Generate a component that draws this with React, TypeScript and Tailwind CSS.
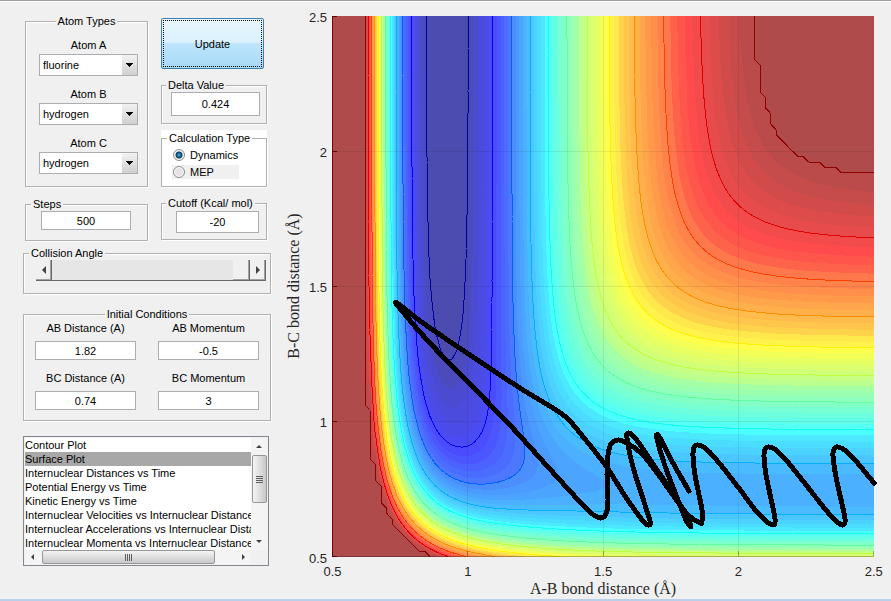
import { useMemo } from "react";
import type { ReactNode } from "react";

type Point = [number, number];

// LEPS parameters, kcal/mol and angstrom
const HF = { depth: 141.2, beta: 2.2187, r0: 0.917 };
const HH = { depth: 109.5, beta: 1.942, r0: 0.7414 };
const SATO = 0.187;
const CEILING = -22.6;
const STEP = 0.02;
const GRID = 101;
const BAND = 2.08;
const BAND_COUNT = 56;
const BANDS_PER_LINE = 5;

const ATOMS = ["hydrogen", "fluorine", "chlorine", "deuterium"];

const PLOTS = [
  "Contour Plot",
  "Surface Plot",
  "Internuclear Distances vs Time",
  "Potential Energy vs Time",
  "Kinetic Energy vs Time",
  "Internuclear Velocities vs Internuclear Distance",
  "Internuclear Accelerations vs Internuclear Distance",
  "Internuclear Momenta vs Internuclear Distance",
];

const TRAJECTORY: Point[] = [
  [689, 491], [673, 463], [660, 438], [657, 435], [657, 439], [664, 463], [676, 495], [686, 520], [691, 527],
  [688, 519], [675, 496], [655, 467], [636, 439], [629, 433], [627, 438], [633, 467], [645, 505], [650, 521],
  [649, 525], [643, 521], [625, 496], [606, 466], [580, 433], [567, 418], [553, 408], [520, 388], [467, 353],
  [423, 323], [400, 305], [396, 303], [398, 306], [419, 331], [447, 361], [507, 422], [548, 467],
  [580, 502], [591, 513], [600, 518], [606, 514], [608, 500], [607, 475], [608, 455], [611, 444], [618, 440],
  [627, 443], [641, 453], [655, 470], [675, 498], [688, 515], [700, 523], [702, 521], [702, 510], [695, 475],
  [693, 456], [694, 447], [698, 445], [705, 448], [715, 458], [738, 487], [756, 511], [766, 521], [773, 525],
  [775, 522], [774, 513], [766, 475], [764, 457], [765, 449], [769, 447], [776, 450], [786, 460], [803, 481],
  [825, 509], [835, 520], [842, 525], [845, 522], [844, 513], [836, 477], [833, 456], [834, 449], [838, 447],
  [846, 451], [855, 460], [874, 483],
];

const px = (r: number) => 332.5 + (r - 0.5) * 270.6;
const py = (r: number) => 556.5 - (r - 0.5) * 270.2;

function energy(ab: number, bc: number) {
  const terms = (bond: typeof HF, r: number) => {
    const e = Math.exp(-bond.beta * (r - bond.r0));
    const scale = bond.depth / (4 * (1 + SATO));
    return {
      q: scale * ((3 + SATO) * e * e - (2 + 6 * SATO) * e),
      j: scale * ((1 + 3 * SATO) * e * e - (6 + 2 * SATO) * e),
    };
  };
  const a = terms(HF, ab);
  const b = terms(HH, bc);
  const c = terms(HF, ab + bc);
  const exchange = ((a.j - b.j) ** 2 + (b.j - c.j) ** 2 + (a.j - c.j) ** 2) / 2;
  return Math.min(CEILING, a.q + b.q + c.q - Math.sqrt(exchange));
}

// 64 step jet colormap, band 0 is the hottest
function jet(band: number) {
  const t = Math.min(63, Math.max(1, Math.floor(64 - 1.11 * band)));
  const ramp = (center: number) => Math.round(255 * Math.min(1, Math.max(0, (24 - Math.abs(t - center)) / 16)));
  return `rgb(${ramp(48)} ${ramp(32)} ${ramp(16)})`;
}

// Marching squares: area above the level and the line along its edge
function traceLevel(values: number[][], level: number) {
  const area: string[] = [];
  const line: string[] = [];
  const x = (i: number) => px(0.5 + i * STEP);
  const y = (j: number) => py(0.5 + j * STEP);
  const f = (n: number) => n.toFixed(1);

  for (let j = 0; j < GRID - 1; j++) {
    let runStart = -1;
    for (let i = 0; i < GRID; i++) {
      const corners: [number, number][] = [[i, j], [i + 1, j], [i + 1, j + 1], [i, j + 1]];
      const inside = i < GRID - 1 ? corners.map(([a, b]) => values[b][a] >= level) : [false];
      const full = inside.length === 4 && inside.every(Boolean);
      if (full) {
        if (runStart < 0) runStart = i;
        continue;
      }
      if (runStart >= 0) {
        area.push(`M${f(x(runStart))} ${f(y(j))}H${f(x(i))}V${f(y(j + 1))}H${f(x(runStart))}Z`);
        runStart = -1;
      }
      if (!inside.some(Boolean)) continue;

      const shape: string[] = [];
      const cuts: string[] = [];
      corners.forEach(([a, b], k) => {
        const [c, d] = corners[(k + 1) % 4];
        if (inside[k]) shape.push(`${f(x(a))} ${f(y(b))}`);
        if (inside[k] !== inside[(k + 1) % 4]) {
          const t = (level - values[b][a]) / (values[d][c] - values[b][a]);
          const cut = `${f(x(a + (c - a) * t))} ${f(y(b + (d - b) * t))}`;
          shape.push(cut);
          cuts.push(cut);
        }
      });
      area.push(`M${shape.join("L")}Z`);
      line.push(`M${cuts[0]}L${cuts[1]}`);
    }
  }
  return { area: area.join(""), line: line.join("") };
}

function smooth(points: Point[]) {
  let d = `M${points[0].join(" ")}`;
  for (let i = 0; i < points.length - 1; i++) {
    const p0 = points[Math.max(0, i - 1)];
    const p1 = points[i];
    const p2 = points[i + 1];
    const p3 = points[Math.min(points.length - 1, i + 2)];
    d += `C${p1[0] + (p2[0] - p0[0]) / 6} ${p1[1] + (p2[1] - p0[1]) / 6} ${p2[0] - (p3[0] - p1[0]) / 6} ${
      p2[1] - (p3[1] - p1[1]) / 6
    } ${p2[0]} ${p2[1]}`;
  }
  return d;
}

function EnergyPlot() {
  const levels = useMemo(() => {
    const values = Array.from({ length: GRID }, (_, j) =>
      Array.from({ length: GRID }, (_, i) => energy(0.5 + i * STEP, 0.5 + j * STEP))
    );
    const result = [];
    for (let k = BAND_COUNT; k >= 0; k--) {
      const level = CEILING - k * BAND - 0.001;
      result.push({ k, color: jet(k), ...traceLevel(values, level) });
    }
    return result;
  }, []);

  return (
    <svg viewBox="280 1 611 598" className="block w-full" role="img" aria-label="Potential energy surface">
      <rect x="332" y="16" width="542" height="541" fill="white" shapeRendering="crispEdges" />
      <g opacity="0.7" shapeRendering="crispEdges">
        <rect x="332" y="16" width="542" height="541" fill={jet(BAND_COUNT + 1)} />
        {levels.map((l) => (
          <path key={l.k} d={l.area} fill={l.color} />
        ))}
      </g>
      <g fill="none" shapeRendering="crispEdges">
        {levels
          .filter((l) => l.k % BANDS_PER_LINE === 0)
          .map((l) => (
            <path key={l.k} d={l.line} stroke={l.color} />
          ))}
      </g>
      <g stroke="black" strokeOpacity="0.08" shapeRendering="crispEdges">
        {[1, 1.5, 2].map((v) => (
          <path key={v} d={`M${px(v)} 16V557M332 ${py(v)}H874`} />
        ))}
      </g>
      <g shapeRendering="crispEdges" fill="none">
        <path d="M332.5 16V557" stroke="#800000" />
        <path d="M332 556.5H874" stroke="black" strokeOpacity="0.3" />
        {[0.5, 1, 1.5, 2, 2.5].map((v) => (
          <g key={v}>
            <path d={`M332 ${py(v)}h5`} stroke="#600000" />
            <path d={`M${px(v)} 556v-5`} stroke="black" strokeOpacity="0.3" />
          </g>
        ))}
      </g>
      <path
        d={smooth(TRAJECTORY)}
        fill="none"
        stroke="black"
        strokeWidth="5"
        strokeLinecap="round"
        strokeLinejoin="round"
        shapeRendering="crispEdges"
      />
      <g fill="#262626" fontFamily="'Liberation Sans', sans-serif" fontSize="13">
        {[0.5, 1, 1.5, 2, 2.5].map((v) => (
          <g key={v}>
            <text x="327" y={py(v) + 6} textAnchor="end">
              {v}
            </text>
            <text x={px(v)} y="576" textAnchor="middle">
              {v}
            </text>
          </g>
        ))}
      </g>
      <g fill="#262626" fontFamily="'Liberation Serif', serif" fontSize="16" textAnchor="middle">
        <text x="603" y="594">
          A-B bond distance (Å)
        </text>
        <text transform="translate(299 286) rotate(-90)">B-C bond distance (Å)</text>
      </g>
    </svg>
  );
}

interface PanelProps {
  title: string;
  className?: string;
  legendClassName?: string;
  children: ReactNode;
}

function Panel({ title, className = "", legendClassName = "ml-[5px] bg-[#f0f0f0]", children }: PanelProps) {
  return (
    <fieldset
      className={`min-w-0 border border-[#b0b0b0] shadow-[1px_1px_0_white,inset_1px_1px_0_white] ${className}`}
    >
      <legend className={`px-[2px] ${legendClassName}`}>{title}</legend>
      {children}
    </fieldset>
  );
}

function NumberBox({ label, value, className }: { label: string; value: string; className: string }) {
  return (
    <input
      type="text"
      aria-label={label}
      defaultValue={value}
      className={`block border border-[#abadb3] bg-white text-center ${className}`}
    />
  );
}

function AtomSelect({ id, label, value }: { id: string; label: string; value: string }) {
  return (
    <div className="flex flex-col items-center gap-[2px]">
      <label htmlFor={id}>{label}</label>
      <div className="relative h-[22px] w-[99px]">
        <select
          id={id}
          defaultValue={value}
          className="h-full w-full appearance-none border border-[#abadb3] bg-white pl-[3px]"
        >
          {ATOMS.map((atom) => (
            <option key={atom}>{atom}</option>
          ))}
        </select>
        <span className="pointer-events-none absolute inset-y-px right-px flex w-[15px] items-center justify-center bg-linear-to-b from-[#f2f2f2] to-[#d0d0d0]">
          <svg width="7" height="4" viewBox="0 0 7 4" shapeRendering="crispEdges">
            <path d="M0 0h7L3.5 4Z" />
          </svg>
        </span>
      </div>
    </div>
  );
}

function Condition({ id, label, value }: { id: string; label: string; value: string }) {
  return (
    <div className="flex w-[101px] flex-col gap-[6px] text-center">
      <label htmlFor={id}>{label}</label>
      <input id={id} type="text" defaultValue={value} className="h-[19px] border border-[#abadb3] bg-white text-center" />
    </div>
  );
}

function Arrow({ d, className = "" }: { d: string; className?: string }) {
  return (
    <svg width="8" height="8" viewBox="0 0 8 8" fill="#404040" className={className}>
      <path d={d} />
    </svg>
  );
}

function CollisionSlider() {
  return (
    <div className="mr-[4px] ml-[12px] flex h-[21px] border-b border-[#696969]">
      <button
        type="button"
        aria-label="Decrease angle"
        className="flex w-[16px] items-center justify-center border-r border-[#696969] bg-[#f0f0f0] shadow-[inset_-1px_-1px_0_#a0a0a0]"
      >
        <Arrow d="M6 0v8L2 4Z" />
      </button>
      <input
        type="range"
        aria-label="Collision Angle"
        min="0"
        max="180"
        defaultValue="180"
        className="min-w-0 flex-1 appearance-none bg-[#e6e6e6] [&::-webkit-slider-thumb]:h-[20px] [&::-webkit-slider-thumb]:w-[17px] [&::-webkit-slider-thumb]:appearance-none [&::-webkit-slider-thumb]:border-r [&::-webkit-slider-thumb]:border-[#696969] [&::-webkit-slider-thumb]:bg-[#f0f0f0] [&::-webkit-slider-thumb]:shadow-[inset_-1px_-1px_0_#a0a0a0]"
      />
      <button
        type="button"
        aria-label="Increase angle"
        className="flex w-[16px] items-center justify-center border-r border-[#696969] bg-[#f0f0f0] shadow-[inset_-1px_-1px_0_#a0a0a0]"
      >
        <Arrow d="M2 0v8L6 4Z" />
      </button>
    </div>
  );
}

function PlotList() {
  return (
    <div className="mt-[15px] mr-[2px] border border-[#828790] bg-[#f0f0f0] p-px">
      <div className="flex">
        <ul role="listbox" aria-label="Plot type" className="h-[112px] min-w-0 flex-1 overflow-hidden bg-white whitespace-nowrap">
          {PLOTS.map((plot) => (
            <li
              key={plot}
              role="option"
              aria-selected={plot === "Surface Plot"}
              className="h-[14px] leading-[14px] aria-selected:bg-[#a8a8a8]"
            >
              {plot}
            </li>
          ))}
        </ul>
        <div className="flex w-[16px] flex-col items-center bg-[#f4f4f4]">
          <Arrow d="M1 6h6L4 3Z" className="mt-[4px]" />
          <div className="mt-[5px] flex h-[48px] w-[15px] flex-col items-center justify-center gap-px rounded-[2px] border border-[#979797] bg-linear-to-r from-[#f5f5f5] to-[#c8c8c8]">
            <span className="h-px w-[7px] bg-[#606060]" />
            <span className="h-px w-[7px] bg-[#606060]" />
            <span className="h-px w-[7px] bg-[#606060]" />
            <span className="h-px w-[7px] bg-[#606060]" />
          </div>
          <Arrow d="M1 2h6L4 5Z" className="mt-auto mb-[4px]" />
        </div>
      </div>
      <div className="mr-[16px] flex h-[14px] items-center bg-[#f4f4f4]">
        <Arrow d="M5 1v6L2 4Z" className="ml-[4px]" />
        <div className="ml-[5px] flex h-[14px] w-[173px] items-center justify-center gap-px rounded-[2px] border border-[#979797] bg-linear-to-b from-[#f5f5f5] to-[#c8c8c8]">
          <span className="h-[7px] w-px bg-[#606060]" />
          <span className="h-[7px] w-px bg-[#606060]" />
          <span className="h-[7px] w-px bg-[#606060]" />
          <span className="h-[7px] w-px bg-[#606060]" />
        </div>
        <Arrow d="M3 1v6L6 4Z" className="mr-[4px] ml-auto" />
      </div>
    </div>
  );
}

const radioStyle =
  "size-[12px] appearance-none rounded-full border border-[#8e8f8f] bg-[#e4e4e4] shadow-[inset_0_0_0_1px_white] checked:bg-[radial-gradient(circle,#3fb4e6_0px,#0b3a5c_3px,#e4e4e4_4px)]";

export default function App() {
  return (
    <div className="flex min-h-screen items-start border-t border-b-2 border-t-[#a0a0a0] border-b-[#b8d0ea] bg-[#f0f0f0] font-['Liberation_Sans',sans-serif] text-[11px] leading-[14px] text-black shadow-[inset_0_1px_0_white]">
      <aside className="w-[280px] shrink-0 pt-[13px] pr-[9px] pl-[23px]">
        <div className="flex items-start justify-between pr-[4px] pl-[2px]">
          <div className="w-[123px]">
            <Panel title="Atom Types" className="pt-[10px] pb-[12px]" legendClassName="mx-auto bg-[#f0f0f0]">
              <div className="flex flex-col gap-[11px] pl-[4px]">
                <AtomSelect id="atom-a" label="Atom A" value="fluorine" />
                <AtomSelect id="atom-b" label="Atom B" value="hydrogen" />
                <AtomSelect id="atom-c" label="Atom C" value="hydrogen" />
              </div>
            </Panel>
            <Panel title="Steps" className="mt-[10px] pb-[10px]">
              <NumberBox label="Steps" value="500" className="ml-[15px] h-[19px] w-[90px]" />
            </Panel>
          </div>

          <div className="w-[106px] pt-[4px]">
            <button
              type="button"
              className="block h-[51px] w-[103px] rounded-[2px] border border-[#3c7fb1] bg-[linear-gradient(#eaf6fd,#d9f0fc_48%,#bee6fd_48%,#a7d9f5)] p-px"
            >
              <span className="flex h-full items-center justify-center border border-dotted border-black">Update</span>
            </button>
            <Panel title="Delta Value" className="mt-[9px] pb-[7px]" legendClassName="ml-[4px] bg-[#f0f0f0]">
              <NumberBox label="Delta Value" value="0.424" className="ml-[9px] h-[24px] w-[89px]" />
            </Panel>
            <div className="mt-[6px] bg-white py-px">
              <Panel title="Calculation Type" className="pt-[3px] pb-[7px]" legendClassName="ml-[5px] bg-white">
                <div className="ml-[10px] flex w-[67px] flex-col gap-[3px]">
                  <label className="flex h-[14px] items-center gap-[5px] pl-px">
                    <input type="radio" name="calculation" defaultChecked className={radioStyle} />
                    Dynamics
                  </label>
                  <label className="flex h-[14px] items-center gap-[5px] bg-[#f0f0f0] pl-px">
                    <input type="radio" name="calculation" className={radioStyle} />
                    MEP
                  </label>
                </div>
              </Panel>
            </div>
            <Panel title="Cutoff (Kcal/ mol)" className="mt-[8px] pt-px pb-[6px]" legendClassName="ml-[4px] bg-[#f0f0f0]">
              <NumberBox label="Cutoff (Kcal/ mol)" value="-20" className="ml-[14px] h-[22px] w-[83px]" />
            </Panel>
          </div>
        </div>

        <Panel title="Collision Angle" className="mt-[5px] pb-[12px]" legendClassName="ml-[5px] bg-[#f0f0f0]">
          <CollisionSlider />
        </Panel>

        <Panel title="Initial Conditions" className="mt-[13px] pb-[10px]" legendClassName="mx-auto bg-[#f0f0f0]">
          <div className="flex flex-wrap gap-x-[22px] gap-y-[11px] pl-[11px]">
            <Condition id="ab-distance" label="AB Distance (A)" value="1.82" />
            <Condition id="ab-momentum" label="AB Momentum" value="-0.5" />
            <Condition id="bc-distance" label="BC Distance (A)" value="0.74" />
            <Condition id="bc-momentum" label="BC Momentum" value="3" />
          </div>
        </Panel>

        <PlotList />
      </aside>

      <main className="min-w-0 flex-1">
        <EnergyPlot />
      </main>
    </div>
  );
}
